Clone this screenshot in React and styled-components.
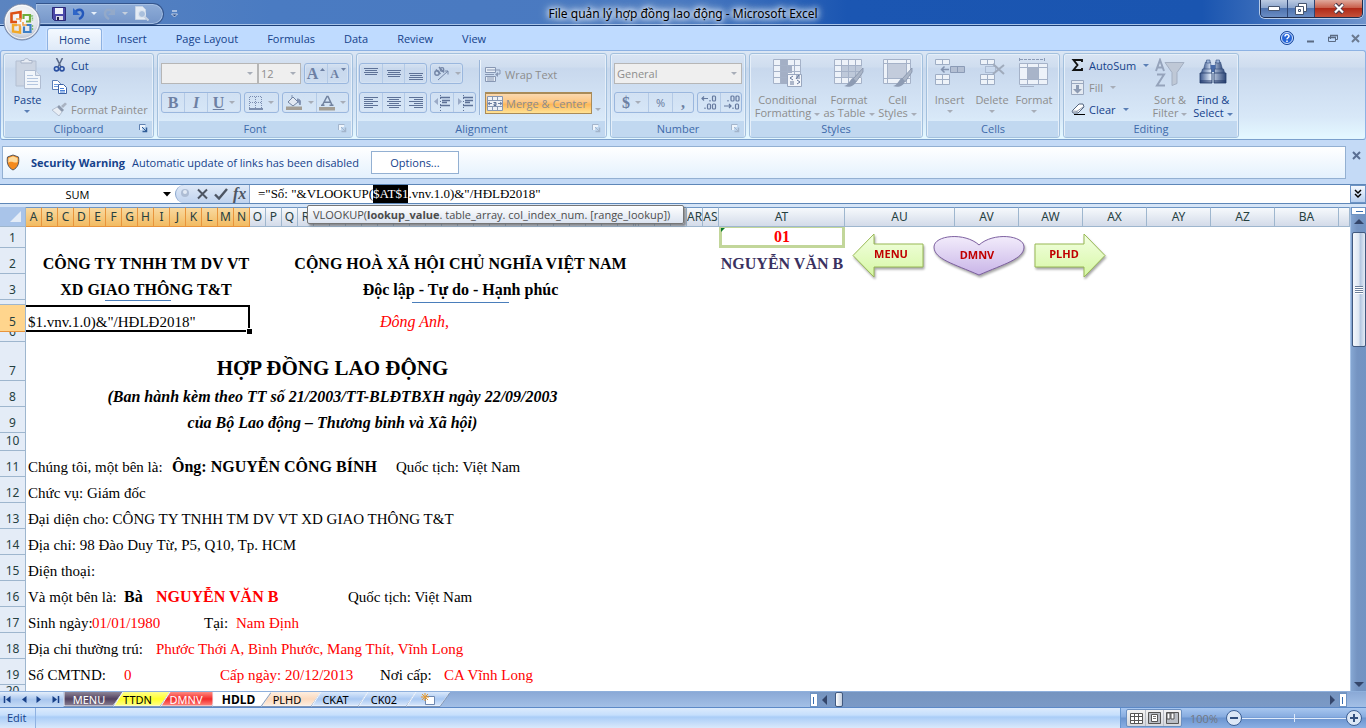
import React from "react";
import styled, { createGlobalStyle, css } from "styled-components";

const Global = createGlobalStyle`
  * { box-sizing: border-box; }
  html, body { margin: 0; padding: 0; height: 100%; }
  body { font-family: "Noto Sans", "Open Sans", sans-serif; font-size: 11px; color: #15428b; overflow: hidden; }
  button, input, select { font-family: inherit; font-size: inherit; color: inherit; margin: 0; padding: 0; border: 0; background: none; }
  button { white-space: nowrap; }
  svg { display: block; flex: none; }
`;

const UI = `"Open Sans", "Noto Sans", sans-serif`;

/* ---------- frame ---------- */
const Window = styled.main`
  display: flex;
  flex-direction: column;
  height: 100vh;
  background: #bfdbff;
`;

const TitleBar = styled.header`
  position: relative;
  display: grid;
  grid-template-columns: 1fr auto 1fr;
  height: 26px;
  background: linear-gradient(90deg, #5b84c0 0, #4a7bc2 20%, #4a79c0 50%, #1b56b2 62%, #1a55b0 88%, #6f94cc 100%);
  border-bottom: 1px solid #1c3f77;
  box-shadow: inset 0 -1px 0 #a9c4e8;
`;

const Title = styled.h1`
  margin: 0;
  font-size: 12px;
  font-weight: 400;
  line-height: 27px;
  color: #000;
  text-shadow: 0 0 5px #fff, 0 0 7px #e6efff, 0 0 9px #dce9ff, 0 0 12px #dce9ff;
`;

const QuickAccess = styled.div`
  display: flex;
  align-items: center;
  gap: 7px;
  padding-left: 36px;
`;

const QuickPill = styled.div`
  display: flex;
  align-items: center;
  gap: 6px;
  height: 22px;
  padding: 0 14px 0 16px;
  border: 1px solid #34558c;
  border-left: 0;
  border-radius: 0 11px 11px 0;
  background: linear-gradient(#8fadd8, #7596c9);
  box-shadow: inset 0 0 0 1px #a6c0e4;
`;

const OfficeButton = styled.button`
  position: absolute;
  left: 3px;
  top: 3px;
  z-index: 3;
  width: 38px;
  height: 38px;
`;

const WindowButtons = styled.div`
  justify-self: end;
  display: flex;
  height: 18px;
  margin-right: 3px;
  border: 1px solid #1d2c4d;
  border-top: 0;
  border-radius: 0 0 5px 5px;
  overflow: hidden;
  box-shadow: 0 0 0 1px #b6cbe8;
`;

const WindowButton = styled.button`
  display: flex;
  align-items: center;
  justify-content: center;
  width: ${(p) => (p.$close ? 47 : 27)}px;
  background: ${(p) =>
    p.$close
      ? "linear-gradient(#e0a99c, #c9604c 45%, #b02a18 50%, #c5513a)"
      : "linear-gradient(#bccbe2, #8da6cd 45%, #4f73ae 50%, #6a8dc4)"};
  border-right: ${(p) => (p.$close ? "0" : "1px solid #2d4573")};
`;

const TabBar = styled.nav`
  display: flex;
  align-items: flex-end;
  gap: 1px;
  height: 24px;
  padding: 0 6px 0 47px;
  background: #bfdbff;
`;

const RibbonTab = styled.button`
  height: 22px;
  padding: 0 14px;
  font-family: ${UI};
  line-height: 22px;
  border-radius: 3px 3px 0 0;
  ${(p) =>
    p.$active &&
    css`
      padding: 0 11px;
      background: linear-gradient(#f4f9ff, #dfeaf8);
      border: 1px solid #8db2e3;
      border-bottom: 0;
      box-shadow: 0 0 2px #fff;
    `}
`;

const TabBarEnd = styled.div`
  display: flex;
  align-items: center;
  gap: 13px;
  height: 24px;
  margin-left: auto;
`;

/* ---------- ribbon ---------- */
const Ribbon = styled.section`
  display: flex;
  gap: 3px;
  height: 90px;
  padding: 2px 2px 1px;
  border: 1px solid #8db2e3;
  border-bottom: 1px solid #7ba0cd;
  border-radius: 3px;
  background: linear-gradient(#dbe6f4 0, #cfddef 18%, #c8d8ed 20%, #d8e8f8 75%, #e3f7ff 97%);
`;

const Group = styled.section`
  display: flex;
  flex-direction: column;
  width: ${(p) => p.$w}px;
  border: 1px solid #a3c0dd;
  border-radius: 3px;
  box-shadow: inset 0 0 0 1px #e6eff9;
`;

const GroupBody = styled.div`
  display: flex;
  flex: 1;
  min-height: 0;
  gap: ${(p) => p.$gap || 0}px;
  padding: 0 ${(p) => p.$pad || 3}px;
`;

const GroupTitle = styled.footer`
  position: relative;
  flex: none;
  height: 16px;
  margin: 0 1px;
  font-family: ${UI};
  line-height: 16px;
  text-align: center;
  color: #3e6aaa;
  background: #c1d8f0;
`;

const Launcher = styled.button`
  position: absolute;
  right: 4px;
  top: 3px;
`;

const Stack = styled.div`
  display: flex;
  flex-direction: column;
  flex: none;
  width: ${(p) => (p.$w ? p.$w + "px" : "auto")};
  gap: ${(p) => p.$gap || 0}px;
  padding-top: ${(p) => p.$top || 0}px;
`;

const Row = styled.div`
  display: flex;
  gap: ${(p) => (p.$tight ? 0 : 3)}px;
  height: 21px;
`;

const SmallButton = styled.button`
  display: flex;
  align-items: center;
  gap: 4px;
  height: 22px;
  font-family: ${UI};
  color: ${(p) => (p.disabled ? "#8d8d8d" : "#15428b")};
`;

const BigButton = styled.button`
  display: flex;
  flex: none;
  flex-direction: column;
  align-items: center;
  width: ${(p) => p.$w}px;
  padding-top: 4px;
  font-family: ${UI};
  line-height: 13px;
  color: ${(p) => (p.disabled ? "#8d8d8d" : "#15428b")};
`;

const BigLabel = styled.span`
  display: flex;
  flex-direction: column;
  align-items: center;
  margin-top: 3px;
`;

const Caret = styled.i`
  display: ${(p) => (p.$block ? "block" : "inline-block")};
  width: 0;
  height: 0;
  vertical-align: middle;
  margin: ${(p) => (p.$block ? "4px auto" : p.$flush ? "0" : "0 0 0 3px")};
  border: 3px solid transparent;
  border-top-color: ${(p) => p.$color || "#5a7fb5"};
  border-bottom: 0;
`;

const Segment = styled.div`
  display: flex;
  height: 21px;
  border: 1px solid #9ab7de;
  border-radius: 3px;
  box-shadow: inset 0 0 0 1px #d5e2f2;
`;

const SegmentButton = styled.button`
  display: flex;
  align-items: center;
  justify-content: center;
  gap: 2px;
  width: ${(p) => p.$w}px;
  color: #6d80a3;
  & + & { border-left: 1px solid #b4cae6; }
`;

const Glyph = styled.span`
  font-family: "Liberation Serif", serif;
  font-size: ${(p) => p.$size || 16}px;
  font-weight: 700;
  line-height: 16px;
  color: ${(p) => p.$ink || "inherit"};
  font-style: ${(p) => (p.$italic ? "italic" : "normal")};
  text-decoration: ${(p) => (p.$underline ? "underline" : "none")};
`;

const SelectBox = styled.label`
  position: relative;
  display: flex;
  width: ${(p) => p.$w}px;
  height: 21px;
  border: 1px solid #b6b6b6;
  background: #efefef;
`;

const Select = styled.select`
  width: 100%;
  padding-left: 2px;
  appearance: none;
  color: #8d8d8d;
  opacity: 1;
  font-family: ${UI};
`;

const SelectCaret = styled(Caret)`
  position: absolute;
  right: 4px;
  top: 8px;
  margin: 0;
`;

const Divider = styled.div`
  width: 1px;
  flex: none;
  margin: 6px 5px 6px 3px;
  background: #9ab5d8;
  box-shadow: 1px 0 0 #eef5fc;
`;

const MergeButton = styled.button`
  display: flex;
  align-items: center;
  gap: 3px;
  width: 107px;
  height: 22px;
  padding-left: 1px;
  border: 1px solid #a98b58;
  border-top-width: 2px;
  color: #8d8d8d;
  font-family: ${UI};
  background: linear-gradient(#fbd8ae 0, #fdc885 40%, #fdb85a 55%, #ffe294 100%);
`;

/* ---------- message bar ---------- */
const MessageArea = styled.aside`
  display: flex;
  gap: 6px;
  padding: 6px 5px 5px 2px;
  background: #c4daf6;
`;

const Message = styled.div`
  display: flex;
  flex: 1;
  align-items: center;
  height: 33px;
  padding-left: 3px;
  border: 1px solid #93b0d2;
  background: linear-gradient(#fff, #e4f1fd);
  font-family: ${UI};
`;

const MessageTitle = styled.strong`
  margin: 0 7px 0 11px;
`;

const OptionsButton = styled.button`
  width: 88px;
  height: 23px;
  margin-left: 12px;
  border: 1px solid #93b0d2;
  background: #fff;
`;

/* ---------- formula bar ---------- */
const FormulaBar = styled.div`
  position: relative;
  display: flex;
  height: 20px;
  border-top: 1px solid #5e87b8;
  border-bottom: 1px solid #5e87b8;
  background: #fff;
`;

const NameBox = styled.label`
  display: flex;
  align-items: center;
  width: 175px;
`;

const NameInput = styled.input`
  width: 155px;
  margin-right: 8px;
  text-align: center;
  color: #000;
  font-family: ${UI};
  outline: 0;
`;

const FormulaTools = styled.div`
  display: flex;
  align-items: center;
  gap: 5px;
  width: 75px;
  padding-left: 5px;
  border: 1px solid #8aa7cf;
  border-width: 0 1px 0 1px;
  border-radius: 9px 0 0 9px;
  background: linear-gradient(#dfe9f7, #c0d3ee);
  button { display: flex; }
`;

const Formula = styled.div`
  flex: 1;
  padding-left: 8px;
  color: #000;
  font: 13px/18px "Liberation Serif", serif;
  mark { display: inline-block; background: #000; color: #fff; }
`;

const ExpandButton = styled.button`
  display: flex;
  align-items: center;
  justify-content: center;
  width: 16px;
  border: 1px solid #6d93c4;
  background: linear-gradient(#f5f9fe, #b8d0f0);
`;

const Tooltip = styled.div`
  position: absolute;
  left: 307px;
  top: 20px;
  z-index: 5;
  height: 19px;
  padding: 0 13px 0 5px;
  border: 1px solid #767676;
  border-radius: 2px;
  background: linear-gradient(#fff, #dbe3f0);
  box-shadow: 2px 2px 2px rgba(80, 80, 80, 0.6);
  color: #4c4c4c;
  font-family: ${UI};
  line-height: 17px;
  white-space: nowrap;
`;

/* ---------- sheet ---------- */
const Body = styled.div`
  display: flex;
  flex: 1;
  min-height: 0;
  border-top: 3px solid #d6e5f7;
`;

const SheetArea = styled.div`
  position: relative;
  flex: 1;
  min-width: 0;
  overflow: hidden;
  background: #fff;
`;

const Grid = styled.table`
  width: 100%;
  border-collapse: separate;
  border-spacing: 0;
  table-layout: fixed;
  color: #000;
  font-family: "Liberation Serif", serif;
  td, th { padding: 0; }
`;

const ColHead = styled.th`
  height: 20px;
  overflow: hidden;
  border-right: 1px solid ${(p) => (p.$on ? "#e8943c" : "#9eb6ce")};
  border-bottom: 1px solid ${(p) => (p.$on ? "#e8943c" : "#9eb6ce")};
  border-top: 1px solid #6f96c4;
  background: ${(p) => (p.$on ? "linear-gradient(#f9d99f, #f2bb62)" : "linear-gradient(#f6f9fc, #d3dbe9)")};
  color: #26403f;
  font: 400 12px/18px "Noto Sans", sans-serif;
`;

const Corner = styled.th`
  border-right: 1px solid #9eb6ce;
  border-bottom: 1px solid #9eb6ce;
  background: #a9c4e9;
  svg { margin-left: 9px; }
`;

const RowHead = styled.th`
  border-right: 1px solid #9eb6ce;
  background: ${(p) => (p.$on ? "#ffd58d" : "#e4ecf7")};
  color: #26403f;
  font: 400 12px/18px "Noto Sans", sans-serif;
  div {
    display: flex;
    align-items: flex-end;
    justify-content: center;
    height: ${(p) => p.$h}px;
    overflow: hidden;
    border-bottom: 1px solid ${(p) => (p.$on ? "#e8943c" : "#9eb6ce")};
  }
`;

const tones = { red: "#f00", navy: "#3a3160" };

const Cell = styled.td`
  position: relative;
  color: ${(p) => tones[p.$tone] || "#000"};
  font-weight: ${(p) => (p.$bold ? 700 : 400)};
  font-style: ${(p) => (p.$italic ? "italic" : "normal")};
  font-size: ${(p) => (p.$large ? 21 : p.$bold || p.$italic ? 16 : 15)}px;
  line-height: ${(p) => (p.$large ? 26 : 20)}px;
  white-space: nowrap;
`;

const CellText = styled.div`
  display: flex;
  align-items: flex-end;
  justify-content: ${(p) => (p.$center ? "center" : "flex-start")};
  height: ${(p) => p.$h}px;
  padding-left: ${(p) => (p.$center ? 0 : 2)}px;
  ${(p) =>
    p.$kind === "edit" &&
    css`
      box-shadow: inset -2px 2px 0 #000, inset 0 -2px 0 #000;
    `}
  ${(p) =>
    p.$kind === "code" &&
    css`
      align-items: center;
      border: 3px solid #c2d69a;
      border-top-width: 1px;
    `}
`;

const FillHandle = styled.i`
  position: absolute;
  right: -2px;
  bottom: -2px;
  width: 5px;
  height: 5px;
  background: #000;
  box-shadow: 0 0 0 1px #fff;
`;

const ErrorMark = styled.i`
  position: absolute;
  left: 2px;
  top: 1px;
  border: 2px solid transparent;
  border-top-color: #0a7a28;
  border-left-color: #0a7a28;
`;

const Shape = styled.button`
  position: absolute;
  left: ${(p) => p.$x}px;
  top: ${(p) => p.$y}px;
  display: grid;
  place-items: center;
  color: #c00000;
  font-weight: 700;
  line-height: 12px;
  filter: drop-shadow(1px 2px 1px rgba(0, 0, 0, 0.35));
  svg, span { grid-area: 1 / 1; }
  span {
    position: relative;
    padding: 0 ${(p) => p.$back || 0}px 3px ${(p) => p.$shift || 0}px;
  }
`;

const Underline = styled.div`
  position: absolute;
  left: ${(p) => p.$x}px;
  top: ${(p) => p.$y}px;
  width: ${(p) => p.$w}px;
  height: 1px;
  background: #4a7ebb;
`;

const VScroll = styled.div`
  display: flex;
  flex-direction: column;
  align-items: center;
  width: 16px;
  border-left: 1px solid #a9c4e8;
  background: linear-gradient(90deg, #86a7d3, #7594c2 40%, #7193c3);
`;

const Splitter = styled.i`
  width: ${(p) => (p.$v ? 8 : 15)}px;
  height: ${(p) => (p.$v ? 14 : 8)}px;
  flex: none;
  border: 1px solid #6d93c4;
  background: ${(p) =>
    p.$v
      ? "linear-gradient(#3c6fb0, #3c6fb0) 2px 3px / 1px 7px no-repeat #fff"
      : "linear-gradient(#3c6fb0, #3c6fb0) 4px 3px / 7px 1px no-repeat #fff"};
`;

const VThumb = styled.div`
  display: flex;
  flex-direction: column;
  align-items: center;
  justify-content: center;
  gap: 1px;
  width: 14px;
  height: 115px;
  margin: 3px 0 auto;
  border: 1px solid #41597f;
  border-radius: 2px;
  background: linear-gradient(90deg, #f4f7fb, #dde6f2 50%, #b3c6e0 60%, #e3ebf5);
  i { width: 8px; height: 1px; background: #6c7f9b; box-shadow: 0 1px 0 #fff; }
`;

const ScrollButton = styled.button`
  display: flex;
  align-items: center;
  justify-content: center;
  height: 14px;
  width: 14px;
`;

/* ---------- bottom ---------- */
const SheetTabs = styled.div`
  display: flex;
  align-items: center;
  height: 16px;
  border-top: 1px solid #8fb0dc;
  background: linear-gradient(#8aa9d6, #a3bfe6);
`;

const TabNav = styled.div`
  display: flex;
  width: 63px;
  height: 15px;
  background: linear-gradient(#e4eefb, #a9c6ee 50%, #c7dcf6);
  button { display: flex; flex: 1; align-items: center; justify-content: center; }
`;

const SheetTab = styled.button`
  position: relative;
  display: grid;
  place-items: center;
  width: ${(p) => p.$w}px;
  height: 15px;
  margin-right: -10px;
  z-index: ${(p) => (p.$active ? 2 : 1)};
  color: ${(p) => p.$ink || "#000"};
  font-size: ${(p) => (p.$active ? 12 : 11)}px;
  font-weight: ${(p) => (p.$active ? 700 : 400)};
  line-height: 14px;
  svg, span { grid-area: 1 / 1; }
  span { padding-right: ${(p) => p.$pad || 0}px; }
`;

const HScroll = styled.div`
  display: flex;
  align-items: center;
  width: 537px;
  height: 15px;
  margin: 0 19px 0 auto;
  background: linear-gradient(#7594bf, #7b9ac7);
`;

const HThumb = styled.i`
  width: 8px;
  height: 15px;
  margin: 0 auto 0 3px;
  border: 1px solid #41597f;
  border-radius: 2px;
  background: linear-gradient(90deg, #fff, #c3cede);
`;

const StatusBar = styled.footer`
  display: flex;
  align-items: center;
  height: 21px;
  border-top: 1px solid #5c89c7;
  background: linear-gradient(#dceafc 0, #c6dffc 35%, #aacdf7 45%, #d9e8fb 100%);
`;

const Mode = styled.span`
  width: 36px;
  padding-left: 7px;
  font-family: ${UI};
  line-height: 20px;
  border-right: 1px solid #8fb2e2;
`;

const ViewTools = styled.div`
  display: flex;
  align-items: center;
  width: 246px;
  height: 20px;
  margin-left: auto;
  padding: 0 4px 0 5px;
  border-left: 1px solid #6795cf;
  background: linear-gradient(#a8c7f0, #86abdf 45%, #6b94cf 50%, #8bb0e4);
`;

const ViewGroup = styled.div`
  display: flex;
  height: 18px;
  border: 1px solid #6b8fc0;
  border-radius: 2px;
  background: linear-gradient(#f4f4f4, #d4d7dc);
  button { display: flex; align-items: center; justify-content: center; width: 18px; }
  button + button { border-left: 1px solid #b9bdc4; }
`;

const ZoomLabel = styled.button`
  width: 44px;
  color: #72777f;
  font-family: ${UI};
`;

const ZoomSlider = styled.input`
  flex: 1;
  min-width: 0;
  height: 16px;
  appearance: none;
  background: linear-gradient(#dfeafa, #dfeafa) center / 100% 1px no-repeat;
  &::-webkit-slider-thumb {
    appearance: none;
    width: 1px;
    height: 8px;
    background: #dfeafa;
  }
`;

const RoundButton = styled.button`
  display: flex;
`;

const Hidden = styled.span`
  position: absolute;
  width: 1px;
  height: 1px;
  overflow: hidden;
  clip-path: inset(50%);
`;

/* ---------- icons ---------- */
const Svg = ({ w, h, children }) => (
  <svg width={w} height={h} viewBox={`0 0 ${w} ${h}`} fill="none" aria-hidden="true">{children}</svg>
);

const OfficeLogo = () => (
  <Svg w={38} h={38}>
    <defs>
      <radialGradient id="orb" cx="50%" cy="35%" r="70%">
        <stop offset="0" stopColor="#fff" /><stop offset=".65" stopColor="#dfe2ea" /><stop offset="1" stopColor="#a3aec2" />
      </radialGradient>
    </defs>
    <circle cx="19" cy="19" r="18" fill="url(#orb)" stroke="#7285a8" />
    <circle cx="19" cy="19" r="16.500" stroke="#fff" strokeOpacity=".8" />
    <path d="M17.500 16.500V9L8.500 10.500v8.500h5.500" stroke="#dd4f14" strokeWidth="2.600" />
    <path d="M20.500 16v-4h6.500v6.500h-4" stroke="#6fae3c" strokeWidth="2.200" />
    <path d="M17 23v6.500l-7-1v-6.500h4" stroke="#f2a92a" strokeWidth="2.400" />
    <path d="M21 23.500V29h6.500v-7H23" stroke="#3d7fc6" strokeWidth="2.200" />
    <path d="M13 16h4.500v3M24 22h-4v-3M14 22h3v3" stroke="#f0a24a" strokeWidth="1.600" />
    <path d="M28 13h1.500v5M29.500 22v5" stroke="#7fbf74" strokeWidth="1.400" strokeDasharray="2 1" />
  </Svg>
);

const SaveIcon = () => (
  <Svg w={14} h={14}>
    <path d="M.5.5h13v13h-11l-2-2z" fill="#4a48a8" stroke="#2b2a78" />
    <path d="M3 1h8v6H3z" fill="#f1f3fb" /><path d="M4 9h7v4H4z" fill="#d9dbe8" /><path d="M5 10h2v3H5z" fill="#20204a" />
  </Svg>
);
const UndoIcon = ({ dim, flip }) => (
  <svg width="13" height="13" viewBox="0 0 13 13" fill="none" aria-hidden="true">
    <g transform={flip ? "translate(13 0) scale(-1 1)" : undefined}>
      <path d="M3 6c2-4.500 7.500-4 8 0 .2 3-2 5-4 6" stroke={dim ? "#93a9c9" : "#2458bb"} strokeWidth="2.400" />
      <path d="M1 1v7h7z" fill={dim ? "#93a9c9" : "#2f66c8"} />
    </g>
  </svg>
);
const PreviewIcon = () => (
  <Svg w={15} h={15}>
    <path d="M1.500.5h7l3 3v10h-10z" fill="#e4ebf4" stroke="#c5d2e4" /><circle cx="8" cy="8" r="3.500" fill="#a9bfdc" stroke="#dfe7f2" />
    <path d="M10.500 10.500l4 4" stroke="#c6d1e2" strokeWidth="2" />
  </Svg>
);
const CustomizeIcon = () => (
  <Svg w={7} h={8}><path d="M1 1h5" stroke="#fff" /><path d="M.5 4h6l-3 3z" fill="#274a86" stroke="#dfe9f7" strokeWidth=".8" /></Svg>
);
const HelpIcon = () => (
  <Svg w={14} h={14}>
    <circle cx="7" cy="7" r="6.500" fill="#2565d8" stroke="#1a4594" /><circle cx="7" cy="7" r="5.500" stroke="#cfe0fa" />
    <path d="M5 5.500C5 3 9 3 9 5.300 9 6.700 7 6.800 7 8.300M7 9.500V11" stroke="#fff" strokeWidth="1.500" />
  </Svg>
);
const PasteIcon = () => (
  <Svg w={32} h={32}>
    <path d="M4 3h20v25H4z" fill="#ccd5e3" stroke="#b3bfd2" /><path d="M9 5V2.500h3c0-2.500 5-2.500 5 0h3V5z" fill="#e7ecf4" stroke="#a9b5c9" />
    <path d="M12.500 12.500h11l5 5v13h-16z" fill="#f2f6fb" stroke="#b0bdd2" /><path d="M23.500 12.500v5h5" stroke="#b0bdd2" fill="#dbe4f0" />
    <path d="M15 17.500h6M15 20.500h11M15 23.500h11M15 26.500h11" stroke="#b4c6e0" />
  </Svg>
);
const CutIcon = () => (
  <Svg w={15} h={14}>
    <path d="M4.500 0L9 9M10.500 0L6 9" stroke="#5b6b8a" strokeWidth="1.600" /><circle cx="4.500" cy="10.800" r="2.100" stroke="#2a4fa0" strokeWidth="1.600" /><circle cx="10" cy="10.800" r="2.100" stroke="#2a4fa0" strokeWidth="1.600" />
  </Svg>
);
const CopyIcon = () => (
  <Svg w={15} h={14}>
    <path d="M.5.5h5l3 3v6h-8z" fill="#fff" stroke="#5b7fb8" /><path d="M2 4.500h4M2 6.500h5" stroke="#6c9be0" />
    <path d="M6.500 4.500h5l3 3v6h-8z" fill="#fff" stroke="#3c62a5" /><path d="M8 8.500h4M8 10.500h5M8 12h5" stroke="#4b82d8" />
  </Svg>
);
const PainterIcon = () => (
  <Svg w={15} h={14}>
    <path d="M9 4l4-3.500L15 2l-4 4z" fill="#a9b3c2" /><path d="M7 3l5 5-2 2-5-5z" fill="#8e9aad" /><path d="M5 5l5 5-3 4-7-6z" fill="#e8edf4" stroke="#b3bfd0" />
  </Svg>
);
const LauncherIcon = ({ dim }) => (
  <Svg w={9} h={9}>
    <path d="M.5 6v-5.500h6" stroke={dim ? "#a3b5cc" : "#5e80b0"} /><path d="M3.500 7.500h4v-4" stroke={dim ? "#a3b5cc" : "#315d98"} strokeWidth="1.500" /><path d="M3 3l4 4" stroke={dim ? "#a3b5cc" : "#315d98"} />
    <path d="M1 1h5v2H3v3H1z" fill="#eef4fb" />
  </Svg>
);
const Lines = ({ rows }) => (
  <Svg w={16} h={15}>{rows.map(([y, x1, x2]) => <path key={y} d={`M${x1} ${y}.5H${x2}`} stroke="#5e7297" />)}</Svg>
);
const BorderIcon = () => (
  <Svg w={14} h={14}><path d="M.5 1v11M6.500 1v11M12.500 1v11M1 .5h12M1 6.500h12" stroke="#7b8db0" strokeDasharray="1 1" /><path d="M0 13h14" stroke="#5e7297" strokeWidth="1.500" /></Svg>
);
const FillColorIcon = () => (
  <Svg w={17} h={16}>
    <path d="M2 7l5-5 5 5-5 4z" fill="#e2e9f3" stroke="#71829f" /><path d="M6 3V0M11 4c4 0 4 3 3 6-1-2-1-3-3-4" fill="#7d8fb0" stroke="#7d8fb0" />
    <path d="M0 11.500h16V15H0z" fill="#a39e95" />
  </Svg>
);
const FontColorIcon = () => (
  <Svg w={16} h={16}>
    <path d="M3.500 10L8 1.500l1 0L13 10M5 7.200h6.500M2 10.300h3.500M10.500 10.300h4" stroke="#71829f" strokeWidth="1.500" /><path d="M0 12h16v3.500H0z" fill="#a39e95" />
  </Svg>
);
const OrientIcon = () => (
  <Svg w={17} h={15}>
    <circle cx="4" cy="7" r="2.200" stroke="#7385a6" strokeWidth="1.400" /><path d="M3 3.500l4.500 4.500M6 1l5 5.500" stroke="#7385a6" strokeWidth="1.500" /><circle cx="9" cy="3.500" r="1.800" stroke="#7385a6" strokeWidth="1.300" />
    <path d="M5 14L15 5M15 5h-3.500M15 5v3.500" stroke="#7385a6" />
  </Svg>
);
const IndentIcon = ({ right }) => (
  <Svg w={18} h={16}>
    <path d="M7 2.500h10M9 5.500h8M9 7.500h5M7 10.500h10" stroke="#5e7297" strokeWidth="1.500" /><path d="M7.500 0v16" stroke="#5e7297" strokeDasharray="1 2" />
    <path d={right ? "M6 6.500L2 3v7z" : "M1 6.500L5 3v7z"} fill="#9aaac6" />
  </Svg>
);
const WrapIcon = () => (
  <Svg w={16} h={15}>
    <path d="M.5.5h10v5H.5zM.5 9.500h10v5H.5z" fill="#e6edf6" stroke="#8797b3" /><path d="M2 3h8M2 11h7M2 13h7M0 7.500h9" stroke="#8797b3" /><path d="M11 3h4v4h-3" stroke="#8797b3" /><path d="M13 5v5l-3-2.500z" fill="#8797b3" />
  </Svg>
);
const MergeIcon = () => (
  <Svg w={16} h={15}>
    <path d="M.5.5h15v14H.5zM.5 4.500h15M.5 10.500h15M5.500.5v4M10.500.5v4M5.500 10.500v4M10.500 10.500v4" fill="#eef1f6" stroke="#8797b3" />
    <path d="M1 7.500h4M11 7.500h4M3 6L1 7.500 3 9M13 6l2 1.500L13 9" stroke="#6d7fa2" /><path d="M6.500 6.500h2.500v3H7v-1.500h2" stroke="#5e7297" />
  </Svg>
);
const DecimalIcon = ({ less }) => (
  <Svg w={17} h={15}>
    <g stroke="#667a9f" strokeWidth="1.200">
      {less ? (
        <><rect x="8" y="1" width="3" height="5" rx="1" /><rect x="13" y="1" width="3" height="5" rx="1" /><path d="M5 5v1.500" /><path d="M1 11h7M6 9l2 2-2 2M10 12.500V14" /><rect x="12.500" y="9" width="3" height="5" rx="1" /></>
      ) : (
        <><path d="M1 3.500h6M3 1.500l-2 2 2 2M9 5v1.500" /><rect x="11.500" y="1" width="3" height="5" rx="1" /><path d="M4 12.500V14" /><rect x="6.500" y="9" width="3" height="5" rx="1" /><rect x="11.500" y="9" width="3" height="5" rx="1" /></>
      )}
    </g>
  </Svg>
);
const Brush = () => (
  <g><path d="M30 10l-10 11 3 3 7-10z" fill="#aab5c7" stroke="#8390a8" strokeWidth=".8" /><path d="M20 20c-3 1-4 7-9 8 5 2 11 0 12-5z" fill="#8d9bb3" /></g>
);
const TableBase = ({ children }) => (
  <g><path d="M1.500 1.500h27v24h-27z" fill="#edf2f9" stroke="#a5b2c8" />{children}</g>
);
const CondIcon = () => (
  <Svg w={32} h={32}>
    <TableBase><path d="M8 2h7v24H8zM15 8h5v7h-5z" fill="#a3afc5" /><path d="M2 7.500h26M2 13.500h26M2 19.500h26M8.500 2v24M15.500 2v24M22.500 2v24" stroke="#a5b2c8" /></TableBase>
    <path d="M15.500 16.500h14v12h-14z" fill="#f2f5fa" stroke="#99a7bf" /><path d="M21 18l-3 2 3 2M18 24h4M18 26h4M24 18h4M24 20h4M27 17l-3 4M25 22l3 2-3 2" stroke="#66789a" />
  </Svg>
);
const FormatTableIcon = () => (
  <Svg w={32} h={32}><TableBase><path d="M9 8h20v12H9z" fill="#bec9da" /><path d="M2 7.500h26M2 13.500h26M2 19.500h26M8.500 2v24M15.500 2v24M22.500 2v24" stroke="#a5b2c8" /></TableBase><Brush /></Svg>
);
const CellStylesIcon = () => (
  <Svg w={32} h={32}><TableBase><path d="M6 6h18v14H6z" fill="#c3ccdc" /><path d="M2 5.500h26M2 20.500h26M5.500 2v24M24.500 2v24" stroke="#a5b2c8" /></TableBase><Brush /></Svg>
);
const InsertIcon = () => (
  <Svg w={32} h={32}>
    <path d="M1.500 1.500h14v5h-14zM8.500 1.500v5M1.500 16.500h14v10h-14zM8.500 16.500v10M1.500 21.500h14" fill="#eef3f9" stroke="#9faec5" /><path d="M16.500 8.500h14v6h-14zM23.500 8.500v6" fill="#b3bfd3" stroke="#8b9bb6" />
    <path d="M8 11.500h7M10.500 8.500l-3 3 3 3" stroke="#8292ae" strokeWidth="1.500" />
  </Svg>
);
const DeleteIcon = () => (
  <Svg w={32} h={32}>
    <path d="M4.500 1.500h14v5h-14zM11.500 1.500v5M4.500 16.500h14v10h-14zM11.500 16.500v10M4.500 21.500h14" fill="#eef3f9" stroke="#9faec5" /><path d="M9.500 8.500h10v6h-10z" stroke="#8b9bb6" strokeDasharray="1 1" />
    <path d="M17 6l11 10M28 7L17 16" stroke="#a0abbc" strokeWidth="2" />
  </Svg>
);
const FormatIcon = () => (
  <Svg w={32} h={32}>
    <path d="M1.500 0v4M26.500 0v4M2 1.500h24" stroke="#8b9bb6" strokeDasharray="3 1" /><path d="M1.500 5.500h28v21h-28z" fill="#edf2f9" stroke="#a5b2c8" />
    <path d="M2 9.500h27M2 21.500h27M9.500 6v20M20.500 6v20M2 28.500h14" stroke="#a5b2c8" /><path d="M10 10h10v11H10z" fill="#a8b4c9" />
  </Svg>
);
const SumIcon = () => <Svg w={14} h={12}><path d="M11 3V1H2.500l4 5-4 5H11V9" stroke="#111" strokeWidth="1.900" /></Svg>;
const FillIcon = () => (
  <Svg w={14} h={15}><path d="M.5.5h12v14H.5z" fill="#e4eaf2" stroke="#9aa8bf" /><path d="M.5 3.500h12" stroke="#9aa8bf" /><path d="M5 5h3v4h3l-4.500 4.500L2 9h3z" fill="#8d9bb3" /></Svg>
);
const ClearIcon = () => (
  <Svg w={14} h={14}><path d="M1 9l7-7h4l1 3-6 6H2z" fill="#fff" stroke="#53647f" /><path d="M1 9l5 .3 7-5M6 9.300V11" stroke="#8b98ae" /><path d="M3 12.500h11" stroke="#000" /></Svg>
);
const SortIcon = () => (
  <Svg w={32} h={32}>
    <path d="M2 13l4-11 4 11M3.500 9.500h5M3 16.500h7l-7 11h8" stroke="#95a3bb" strokeWidth="2" /><path d="M11 4.500h19l-7 10v11l-5 2v-13z" fill="#bfc8d6" stroke="#a3afc2" />
  </Svg>
);
const FindIcon = () => (
  <Svg w={32} h={32}>
    <defs><linearGradient id="tube" x1="0" x2="1"><stop offset="0" stopColor="#3a568c" /><stop offset=".4" stopColor="#dbe7f8" /><stop offset="1" stopColor="#2c4677" /></linearGradient></defs>
    <path d="M8.500 4h5l1 9H6zM18.500 4h5l2.500 9h-8z" fill="url(#tube)" stroke="#35507f" strokeWidth=".6" /><path d="M9.500 2h3.500v3H9.500zM19 2h3.500v3H19z" fill="#9cb3d8" stroke="#35507f" strokeWidth=".6" /><path d="M13.500 7h5v7h-5z" fill="#476aa8" />
    <path d="M5.500 11h9v5H4zM17.500 11h9l1.500 5H17.500z" fill="url(#tube)" stroke="#2c4677" strokeWidth=".6" /><path d="M3 15h12v10H3zM17 15h12v10H17z" fill="url(#tube)" stroke="#253c69" strokeWidth=".8" /><path d="M3 22h12v3H3zM17 22h12v3H17z" fill="#1f3565" fillOpacity=".5" />
  </Svg>
);
const ShieldIcon = () => (
  <Svg w={14} h={17}><path d="M7 1l5.500 2C13.500 9 12 13.500 7 16 2 13.500.5 9 1.500 3z" fill="#f58a1c" stroke="#58595e" /><path d="M2.500 4L7 2.300 11.500 4v4C9 10 5 6 2.200 9z" fill="#ffe7b0" fillOpacity=".85" /></Svg>
);
const CloseIcon = ({ size = 9, color = "#6b7a90" }) => <Svg w={size} h={size}><path d={`M1 1l${size - 2} ${size - 2}M${size - 1} 1L1 ${size - 1}`} stroke={color} strokeWidth="2" /></Svg>;
const Triangle = ({ dir, color = "#34466b" }) => {
  const d = { up: "M0 7l5-5 5 5z", down: "M0 3l5 5 5-5z", left: "M7 0L2 5l5 5z", right: "M3 0l5 5-5 5z" }[dir];
  return <Svg w={10} h={10}><path d={d} fill={color} /></Svg>;
};
const NavIcon = ({ left, end }) => (
  <Svg w={9} h={9}>
    <path d={left ? "M7.500 1v7L3 4.500z" : "M1.500 1v7L6 4.500z"} fill="#173f87" />{end && <path d={left ? "M1.500 1v7" : "M7.500 1v7"} stroke="#173f87" strokeWidth="1.500" />}
  </Svg>
);

/* ---------- data ---------- */
// Columns under the function hint (S to AQ) stay unlabelled while it is open.
const columns = [
  ..."ABCDEFGHIJKLMNOPQR".split("").map((n) => [n, 16]),
  ...Array.from({ length: 20 }, () => ["", 16]),
  ["", 2], ["", 3], ["", 16], ["", 16], ["", 16], ["AR", 16], ["AS", 16],
  ["AT", 126], ["AU", 110], ["AV", 64], ["AW", 64], ["AX", 64], ["AY", 64], ["AZ", 64], ["BA", 64], ["", null],
];

// Each row: number, height, cells as [column index, span, text, options].
const sheetRows = [
  [1, 21, [[45, 1, "01", { center: 1, bold: 1, tone: "red", kind: "code" }]]],
  [2, 26, [[0, 15, "CÔNG TY TNHH TM DV VT", { center: 1, bold: 1 }], [15, 26, "CỘNG HOÀ XÃ HỘI CHỦ NGHĨA VIỆT NAM", { center: 1, bold: 1 }], [45, 1, "NGUYỄN VĂN B", { center: 1, bold: 1, tone: "navy" }]]],
  [3, 26, [[0, 15, "XD GIAO THÔNG T&T", { center: 1, bold: 1 }], [15, 26, "Độc lập - Tự do - Hạnh phúc", { center: 1, bold: 1 }]]],
  [4, 5, []],
  [5, 27, [[0, 14, '$1.vnv.1.0)&"/HĐLĐ2018"', { kind: "edit" }], [22, 8, "Đông Anh,", { tone: "red", italic: 1 }]]],
  [6, 10, []],
  [7, 39, [[0, 40, "HỢP ĐỒNG LAO ĐỘNG", { center: 1, bold: 1, large: 1 }]]],
  [8, 26, [[0, 40, "(Ban hành kèm theo TT số 21/2003/TT-BLĐTBXH ngày 22/09/2003", { center: 1, bold: 1, italic: 1 }]]],
  [9, 26, [[0, 40, "của Bộ Lao động – Thương binh và Xã hội)", { center: 1, bold: 1, italic: 1 }]]],
  [10, 18, []],
  [11, 26, [[0, 9, "Chúng tôi, một bên là:", {}], [9, 14, "Ông: NGUYỄN CÔNG BÍNH", { bold: 1 }], [23, 10, "Quốc tịch: Việt Nam", {}]]],
  [12, 26, [[0, 20, "Chức vụ: Giám đốc", {}]]],
  [13, 26, [[0, 38, "Đại diện cho: CÔNG TY TNHH TM DV VT XD GIAO THÔNG T&T", {}]]],
  [14, 26, [[0, 38, "Địa chỉ: 98 Đào Duy Từ, P5, Q10, Tp. HCM", {}]]],
  [15, 26, [[0, 20, "Điện thoại:", {}]]],
  [16, 26, [[0, 6, "Và một bên là:", {}], [6, 2, "Bà", { bold: 1 }], [8, 12, "NGUYỄN VĂN B", { bold: 1, tone: "red" }], [20, 12, "Quốc tịch: Việt Nam", {}]]],
  [17, 26, [[0, 4, "Sinh ngày:", {}], [4, 7, "01/01/1980", { tone: "red" }], [11, 2, "Tại:", {}], [13, 10, "Nam Định", { tone: "red" }]]],
  [18, 26, [[0, 8, "Địa chỉ thường trú:", {}], [8, 28, "Phước Thới A, Bình Phước, Mang Thít, Vĩnh Long", { tone: "red" }]]],
  [19, 26, [[0, 6, "Số CMTND:", {}], [6, 6, "0", { tone: "red" }], [12, 10, "Cấp ngày: 20/12/2013", { tone: "red" }], [22, 4, "Nơi cấp:", {}], [26, 10, "CA Vĩnh Long", { tone: "red" }]]],
  [20, 16, []],
];

const SheetRow = ({ number, height, cells }) => {
  const out = [];
  let at = 0;
  cells.forEach(([start, span, text, o]) => {
    if (start > at) out.push(<td key={at} colSpan={start - at} />);
    out.push(
      <Cell key={start} colSpan={span} $tone={o.tone} $bold={o.bold} $italic={o.italic} $large={o.large}>
        <CellText $h={height} $center={o.center} $kind={o.kind}>{text}</CellText>
        {o.kind === "edit" && <FillHandle />}
        {o.kind === "code" && <ErrorMark />}
      </Cell>
    );
    at = start + span;
  });
  out.push(<td key={at} colSpan={columns.length - at} />);
  return (
    <tr>
      <RowHead scope="row" $h={height} $on={number === 5}><div>{number === 4 ? "" : number}</div></RowHead>
      {out}
    </tr>
  );
};

const ribbonTabs = ["Home", "Insert", "Page Layout", "Formulas", "Data", "Review", "View"];

const sheetTabs = [
  { name: "MENU", w: 60, fill: "#51415f", top: "#8d8496", ink: "#fff", pad: 8, edge: "left" },
  { name: "TTDN", w: 57, fill: "#ffff2a", top: "#ffff8c", pad: 8 },
  { name: "DMNV", w: 62, fill: "#f22a2a", top: "#ff8a80", ink: "#fff", pad: 10 },
  { name: "HDLD", w: 59, fill: "#fff", top: "#fff", pad: 6, active: true, edge: "left" },
  { name: "PLHD", w: 60, fill: "#fbd9bd", top: "#fdeee0", pad: 8 },
  { name: "CKAT", w: 57, fill: "#a9c8f2", top: "#dbe9fb", pad: 8 },
  { name: "CK02", w: 58, fill: "#a9c8f2", top: "#dbe9fb", pad: 6 },
];

const TabShape = ({ w, id, top, fill, edge }) => (
  <Svg w={w} h={15}>
    <defs><linearGradient id={id} x2="0" y2="1"><stop offset="0" stopColor={top} /><stop offset=".5" stopColor={fill} /><stop offset="1" stopColor={top} /></linearGradient></defs>
    <path d={`M${edge ? 1 : 10} 0H${w}L${w - 10} 14H1z`} fill={`url(#${id})`} />
    <path d={`M${edge ? 1 : 10} 0L1 14H${w - 10}L${w} 0`} stroke="#f2f7fe" /><path d={`M1 14.500H${w - 10}L${w} .5`} stroke="#62799c" strokeOpacity=".7" />
  </Svg>
);

const RibbonGroup = ({ title, w, pad, gap, launcher, dim, children }) => (
  <Group $w={w} aria-label={title}>
    <GroupBody $pad={pad} $gap={gap}>{children}</GroupBody>
    <GroupTitle>{title}{launcher && <Launcher aria-label={`${title} settings`}><LauncherIcon dim={dim} /></Launcher>}</GroupTitle>
  </Group>
);

const grey = "#a7adb8";

const Big = ({ icon, w, lines, enabled }) => {
  const caret = <Caret $block={!lines[1]} $color={enabled ? undefined : grey} />;
  return (
    <BigButton $w={w} disabled={!enabled}>
      {icon}
      <BigLabel>
        <span>{lines[0]}</span>
        {lines[1] ? <span>{lines[1]}{caret}</span> : caret}
      </BigLabel>
    </BigButton>
  );
};

const Align = ({ rows }) => <SegmentButton $w={22} disabled><Lines rows={rows} /></SegmentButton>;

export default function App() {
  return (
    <>
      <Global />
      <Window>
        <TitleBar>
          <OfficeButton aria-label="Office"><OfficeLogo /></OfficeButton>
          <QuickAccess>
            <QuickPill>
              <button aria-label="Save"><SaveIcon /></button>
              <button aria-label="Undo"><UndoIcon /></button>
              <Caret $flush $color="#e6effa" />
              <button aria-label="Redo"><UndoIcon dim flip /></button>
              <Caret $flush $color="#c5cfdd" />
              <button aria-label="Print preview"><PreviewIcon /></button>
            </QuickPill>
            <button aria-label="Customize"><CustomizeIcon /></button>
          </QuickAccess>
          <Title>File quản lý hợp đồng lao động - Microsoft Excel</Title>
          <WindowButtons>
            <WindowButton aria-label="Minimize"><Svg w={12} h={5}><path d="M.5.5h11v4H.5z" fill="#fff" stroke="#46556f" /></Svg></WindowButton>
            <WindowButton aria-label="Restore"><Svg w={12} h={12}><path d="M3.500.5h8v8h-8z" fill="#fff" stroke="#46556f" /><path d="M.5 3.500h8v8h-8z" fill="#fff" stroke="#46556f" /><path d="M3.500 6.500h2v2h-2z" stroke="#46556f" /></Svg></WindowButton>
            <WindowButton $close aria-label="Close"><Svg w={12} h={11}><path d="M2 1l8 9M10 1L2 10" stroke="#4b3a4a" strokeWidth="4" /><path d="M2 1.500l8 8M10 1.500l-8 8" stroke="#fff" strokeWidth="2.200" /></Svg></WindowButton>
          </WindowButtons>
        </TitleBar>

        <TabBar>
          {ribbonTabs.map((name) => <RibbonTab key={name} $active={name === "Home"}>{name}</RibbonTab>)}
          <TabBarEnd>
            <button aria-label="Help"><HelpIcon /></button>
            <button aria-label="Minimize workbook"><Svg w={8} h={9}><path d="M0 7.500h7" stroke="#5b6b83" strokeWidth="2" /></Svg></button>
            <button aria-label="Restore workbook"><Svg w={10} h={9}><path d="M2.500 5V1.500h7v4H8M.5 3.500h7v4h-7z" stroke="#5b6b83" /><path d="M2 1.500h8M0 3.500h8" stroke="#5b6b83" strokeWidth="1.500" /></Svg></button>
            <button aria-label="Close workbook"><CloseIcon /></button>
          </TabBarEnd>
        </TabBar>

        <Ribbon>
          <RibbonGroup title="Clipboard" w={151} pad={2} gap={3} launcher>
            <Big icon={<PasteIcon />} w={43} lines={["Paste"]} enabled />
            <Stack>
              <SmallButton><CutIcon />Cut</SmallButton>
              <SmallButton><CopyIcon />Copy</SmallButton>
              <SmallButton disabled><PainterIcon />Format Painter</SmallButton>
            </Stack>
          </RibbonGroup>

          <RibbonGroup title="Font" w={196} launcher dim>
            <Stack $gap={8} $top={9}>
              <Row>
                <Row $tight>
                  <SelectBox $w={97}><Hidden>Font</Hidden><Select disabled><option> </option></Select><SelectCaret $color={grey} /></SelectBox>
                  <SelectBox $w={43}><Hidden>Size</Hidden><Select disabled defaultValue="12"><option>12</option></Select><SelectCaret $color={grey} /></SelectBox>
                </Row>
                <Segment>
                  <SegmentButton $w={22} disabled><Glyph>A</Glyph><Svg w={5} h={12}><path d="M0 3l2.500-3L5 3z" fill="#6d80a3" /></Svg></SegmentButton>
                  <SegmentButton $w={21} disabled><Glyph $size={12}>A</Glyph><Svg w={5} h={12}><path d="M0 0h5L2.500 3z" fill="#6d80a3" /></Svg></SegmentButton>
                </Segment>
              </Row>
              <Row>
                <Segment>
                  <SegmentButton $w={22} disabled><Glyph>B</Glyph></SegmentButton>
                  <SegmentButton $w={23} disabled><Glyph $italic>I</Glyph></SegmentButton>
                  <SegmentButton $w={33} disabled><Glyph $underline>U</Glyph><Caret $color={grey} /></SegmentButton>
                </Segment>
                <Segment><SegmentButton $w={33} disabled><BorderIcon /><Caret $color={grey} /></SegmentButton></Segment>
                <Segment>
                  <SegmentButton $w={33} disabled><FillColorIcon /><Caret $color={grey} /></SegmentButton>
                  <SegmentButton $w={32} disabled><FontColorIcon /><Caret $color={grey} /></SegmentButton>
                </Segment>
              </Row>
            </Stack>
          </RibbonGroup>

          <RibbonGroup title="Alignment" w={251} pad={2} launcher dim>
            <Stack $gap={8} $top={9}>
              <Row>
                <Segment>
                  <Align rows={[[2, 1, 15], [4, 2, 14], [6, 1, 15], [8, 2, 14]]} />
                  <Align rows={[[4, 1, 15], [6, 2, 14], [8, 1, 15], [10, 2, 14]]} />
                  <Align rows={[[7, 1, 15], [9, 2, 14], [11, 1, 15], [13, 1, 15]]} />
                </Segment>
                <Segment><SegmentButton $w={31} disabled><OrientIcon /><Caret $color={grey} /></SegmentButton></Segment>
              </Row>
              <Row>
                <Segment>
                  <Align rows={[[2, 1, 15], [4, 1, 10], [6, 1, 15], [8, 1, 10], [10, 1, 15], [12, 1, 10]]} />
                  <Align rows={[[2, 1, 15], [4, 3, 13], [6, 1, 15], [8, 3, 13], [10, 1, 15], [12, 3, 13]]} />
                  <Align rows={[[2, 1, 15], [4, 6, 15], [6, 1, 15], [8, 6, 15], [10, 1, 15], [12, 6, 15]]} />
                </Segment>
                <Segment>
                  <SegmentButton $w={22} disabled><IndentIcon /></SegmentButton>
                  <SegmentButton $w={22} disabled><IndentIcon right /></SegmentButton>
                </Segment>
              </Row>
            </Stack>
            <Divider />
            <Stack $gap={7} $top={9}>
              <SmallButton disabled><WrapIcon />Wrap Text</SmallButton>
              <MergeButton disabled><MergeIcon />Merge &amp; Center</MergeButton>
            </Stack>
            <Stack $top={46}><button aria-label="Merge options" disabled><Caret $color={grey} /></button></Stack>
          </RibbonGroup>

          <RibbonGroup title="Number" w={136} launcher dim>
            <Stack $gap={8} $top={9}>
              <SelectBox $w={128}><Hidden>Number format</Hidden><Select disabled defaultValue="General"><option>General</option></Select><SelectCaret $color={grey} /></SelectBox>
              <Row>
                <Segment>
                  <SegmentButton $w={33} disabled><Glyph>$</Glyph><Caret $color={grey} /></SegmentButton>
                  <SegmentButton $w={24} disabled>%</SegmentButton>
                  <SegmentButton $w={21} disabled><Glyph>,</Glyph></SegmentButton>
                </Segment>
                <Segment>
                  <SegmentButton $w={22} disabled><DecimalIcon /></SegmentButton>
                  <SegmentButton $w={21} disabled><DecimalIcon less /></SegmentButton>
                </Segment>
              </Row>
            </Stack>
          </RibbonGroup>

          <RibbonGroup title="Styles" w={174}>
            <Big icon={<CondIcon />} w={69} lines={["Conditional", "Formatting"]} />
            <Big icon={<FormatTableIcon />} w={54} lines={["Format", "as Table"]} />
            <Big icon={<CellStylesIcon />} w={43} lines={["Cell", "Styles"]} />
          </RibbonGroup>

          <RibbonGroup title="Cells" w={134} pad={1}>
            <Big icon={<InsertIcon />} w={43} lines={["Insert"]} />
            <Big icon={<DeleteIcon />} w={42} lines={["Delete"]} />
            <Big icon={<FormatIcon />} w={42} lines={["Format"]} />
          </RibbonGroup>

          <RibbonGroup title="Editing" w={176} pad={7}>
            <Stack $w={76}>
              <SmallButton><SumIcon />AutoSum<Caret /></SmallButton>
              <SmallButton disabled><FillIcon />Fill<Caret $color={grey} /></SmallButton>
              <SmallButton><ClearIcon />Clear<Caret /></SmallButton>
            </Stack>
            <Big icon={<SortIcon />} w={46} lines={["Sort &", "Filter"]} />
            <Big icon={<FindIcon />} w={40} lines={["Find &", "Select"]} enabled />
          </RibbonGroup>
        </Ribbon>

        <MessageArea>
          <Message>
            <ShieldIcon />
            <MessageTitle>Security Warning</MessageTitle>
            Automatic update of links has been disabled
            <OptionsButton>Options...</OptionsButton>
          </Message>
          <Stack $top={5}><button aria-label="Close message"><CloseIcon color="#5a6f93" /></button></Stack>
        </MessageArea>

        <FormulaBar>
          <NameBox><Hidden>Name box</Hidden><NameInput defaultValue="SUM" /><Svg w={8} h={5}><path d="M0 0h8L4 4.500z" fill="#000" /></Svg></NameBox>
          <FormulaTools>
            <Svg w={10} h={10}><circle cx="4" cy="4" r="4" fill="#aebdd4" /><circle cx="4" cy="3" r="2" fill="#e2eaf5" /></Svg>
            <button aria-label="Cancel"><Svg w={13} h={12}><path d="M2 1.500l9 9M11 1.500l-9 9" stroke="#4d5563" strokeWidth="2" /></Svg></button>
            <button aria-label="Enter"><Svg w={14} h={12}><path d="M1 6.500l4 4L13 1" stroke="#4d5563" strokeWidth="2.400" /></Svg></button>
            <button aria-label="Insert function"><Glyph $italic $ink="#4d5563">fx</Glyph></button>
          </FormulaTools>
          <Formula>="Số: "&amp;VLOOKUP(<mark>$AT$1</mark>.vnv.1.0)&amp;"/HĐLĐ2018"</Formula>
          <ExpandButton aria-label="Expand formula bar"><Svg w={8} h={10}><path d="M1 1l3 3 3-3M1 5l3 3 3-3" stroke="#000" strokeWidth="1.500" /></Svg></ExpandButton>
          <Tooltip role="tooltip">VLOOKUP(<b>lookup_value</b>. table_array. col_index_num. [range_lookup])</Tooltip>
        </FormulaBar>

        <Body>
          <SheetArea>
            <Grid>
              <colgroup>
                <col width={26} />
                {columns.map(([, w], i) => <col key={i} width={w ?? undefined} />)}
              </colgroup>
              <thead>
                <tr>
                  <Corner><Svg w={13} h={13}><path d="M12 1v11H1z" fill="#e4ecf7" /></Svg></Corner>
                  {columns.map(([name], i) => <ColHead key={i} scope="col" $on={i < 14}>{name}</ColHead>)}
                </tr>
              </thead>
              <tbody>
                {sheetRows.map(([n, h, cells]) => <SheetRow key={n} number={n} height={h} cells={cells} />)}
              </tbody>
            </Grid>
            <Underline $x={105} $y={93} $w={66} />
            <Underline $x={412} $y={95} $w={97} />
            <Shape $x={852} $y={26} $shift={6}>
              <Svg w={72} h={45}>
                <defs><linearGradient id="leaf" x2="0" y2="1"><stop stopColor="#f3ffe2" /><stop offset="1" stopColor="#d6f7a4" /></linearGradient></defs>
                <path d="M1 22.500L22 1v10h49v23H22v10z" fill="url(#leaf)" stroke="#98b954" />
              </Svg>
              <span>MENU</span>
            </Shape>
            <Shape $x={933} $y={28} $back={4}>
              <Svg w={92} h={42}>
                <defs><linearGradient id="lilac" x2="0" y2="1"><stop stopColor="#f2ecfb" /><stop offset="1" stopColor="#c9b5e8" /></linearGradient></defs>
                <path d="M46 10C60-3 91 0 91 12c0 12-20 17-45 28C21 29 1 24 1 12 1 0 32-3 46 10z" fill="url(#lilac)" stroke="#7d60a0" />
              </Svg>
              <span>DMNV</span>
            </Shape>
            <Shape $x={1034} $y={26} $back={12}>
              <Svg w={72} h={45}><path d="M71 22.500L50 1v10H1v23h49v10z" fill="url(#leaf)" stroke="#98b954" /></Svg>
              <span>PLHD</span>
            </Shape>
          </SheetArea>
          <VScroll>
            <Splitter />
            <ScrollButton aria-label="Scroll up"><Triangle dir="up" /></ScrollButton>
            <VThumb><i /><i /><i /><i /></VThumb>
            <ScrollButton aria-label="Scroll down"><Triangle dir="down" /></ScrollButton>
          </VScroll>
        </Body>

        <SheetTabs>
          <TabNav>
            <button aria-label="First sheet"><NavIcon left end /></button>
            <button aria-label="Previous sheet"><NavIcon left /></button>
            <button aria-label="Next sheet"><NavIcon /></button>
            <button aria-label="Last sheet"><NavIcon end /></button>
          </TabNav>
          {sheetTabs.map((t) => (
            <SheetTab key={t.name} $w={t.w} $ink={t.ink} $pad={t.pad} $active={t.active}>
              <TabShape w={t.w} id={`tab${t.name}`} top={t.top} fill={t.fill} edge={t.edge} /><span>{t.name}</span>
            </SheetTab>
          ))}
          <SheetTab $w={44} aria-label="Insert sheet">
            <TabShape w={44} id="tabnew" top="#dbe9fb" fill="#a9c8f2" />
            <span><Svg w={14} h={13}><path d="M4.500 3.500h9v8h-9z" fill="#fff" stroke="#6f88b0" /><path d="M4 0v8M0 4h8M1 1l6 6M7 1L1 7" stroke="#e89a2c" /></Svg></span>
          </SheetTab>
          <HScroll>
            <Splitter $v />
            <ScrollButton aria-label="Scroll left"><Triangle dir="left" /></ScrollButton>
            <HThumb />
            <ScrollButton aria-label="Scroll right"><Triangle dir="right" /></ScrollButton>
            <Splitter $v />
          </HScroll>
        </SheetTabs>

        <StatusBar>
          <Mode>Edit</Mode>
          <ViewTools>
            <ViewGroup>
              <button aria-label="Normal view"><Svg w={13} h={11}><path d="M.5.5h12v10H.5zM4.500 0v11M8.500 0v11M0 3.500h13M0 7.500h13" stroke="#555" fill="#fff" /></Svg></button>
              <button aria-label="Page layout view"><Svg w={13} h={12}><path d="M.5.5h12v11H.5z" fill="#b9bdc4" stroke="#555" /><path d="M3.500 2.500h6v7h-6z" fill="#fff" stroke="#555" /><path d="M5 4.500h3M5 6.500h3" stroke="#777" /></Svg></button>
              <button aria-label="Page break view"><Svg w={13} h={12}><path d="M.5.5h12v11H.5z" fill="#b9bdc4" stroke="#555" /><path d="M1 1h3v6H1zM5 1h3v6H5z" fill="#fff" stroke="#555" /></Svg></button>
            </ViewGroup>
            <ZoomLabel>100%</ZoomLabel>
            <RoundButton aria-label="Zoom out"><Svg w={16} h={16}><circle cx="8" cy="8" r="7.500" fill="#dce7f6" stroke="#3c5f95" /><path d="M4 8h8" stroke="#33507f" strokeWidth="2" /></Svg></RoundButton>
            <ZoomSlider type="range" aria-label="Zoom" defaultValue="50" />
            <RoundButton aria-label="Zoom in"><Svg w={16} h={16}><circle cx="8" cy="8" r="7.500" fill="#dce7f6" stroke="#3c5f95" /><path d="M4 8h8M8 4v8" stroke="#33507f" strokeWidth="2" /></Svg></RoundButton>
          </ViewTools>
        </StatusBar>
      </Window>
    </>
  );
}
